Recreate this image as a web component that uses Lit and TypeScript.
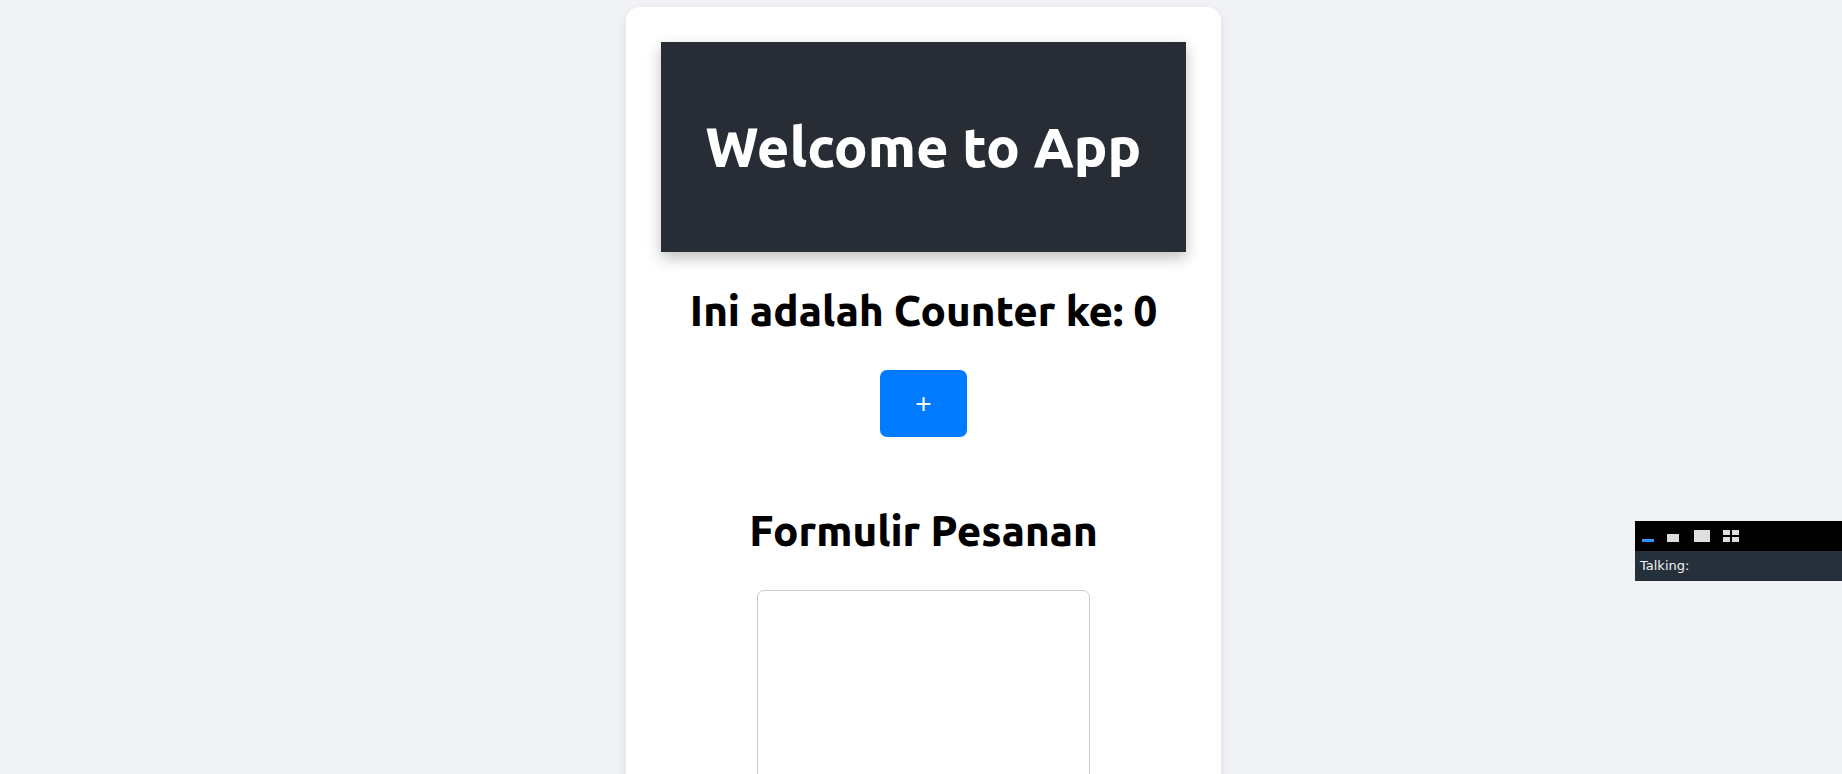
import { LitElement, html, css } from "lit";
import { customElement, state } from "lit/decorators.js";

@customElement("talking-panel")
export class TalkingPanel extends LitElement {
  static styles = css`
    :host {
      display: block;
      background: #26303b;
      color: #f2f2f2;
      font: 13px/30px "DejaVu Sans", sans-serif;
    }
    .bar {
      display: flex;
      align-items: center;
      height: 30px;
      background: #000;
    }
    .view {
      display: flex;
      padding: 0 6px;
      border: 0;
      background: none;
      color: #dedede;
      cursor: pointer;
    }
    .active {
      color: #2c98ff;
    }
    .label {
      margin: 0;
      padding: 0 5px;
    }
  `;

  render() {
    return html`
      <div class="bar">
        <button class="view active" aria-label="Minimize">
          <svg width="14" height="14"><path d="M1 10h12v3H1z" fill="currentColor" /></svg>
        </button>
        <button class="view" aria-label="Small view">
          <svg width="14" height="14"><path d="M0 5h12v8H0z" fill="currentColor" /></svg>
        </button>
        <button class="view" aria-label="Speaker view">
          <svg width="17" height="14"><path d="M1 1h16v12H1z" fill="currentColor" /></svg>
        </button>
        <button class="view" aria-label="Grid view">
          <svg width="17" height="14">
            <path d="M1 1h7v5H1zM10 1h7v5h-7zM1 8h7v5H1zM10 8h7v5h-7z" fill="currentColor" />
          </svg>
        </button>
      </div>
      <p class="label">Talking:</p>
    `;
  }
}

@customElement("app-root")
export class AppRoot extends LitElement {
  static styles = css`
    :host {
      display: block;
      box-sizing: border-box;
      height: 100vh;
      padding: 7px 0 0 5px;
      overflow: hidden;
      background: #f0f2f5;
      color: #000;
      font-family: Ubuntu, "Noto Sans", sans-serif;
      text-align: center;
    }
    .card {
      box-sizing: border-box;
      max-width: 595px;
      margin: 0 auto;
      padding: 35px;
      border-radius: 14px;
      background: #fff;
      box-shadow: 0 4px 10px rgba(0, 0, 0, 0.1);
    }
    .banner {
      padding: 73px 28px;
      background: #282c34;
      color: #fff;
      box-shadow: 0 6px 14px rgba(0, 0, 0, 0.25);
    }
    .title {
      margin: 0;
      font-size: 56px;
      line-height: 64px;
      font-weight: 800;
      white-space: nowrap;
    }
    .heading {
      margin: 35px 0;
      font-size: 42px;
      line-height: 48px;
      font-weight: 800;
      white-space: nowrap;
    }
    .add {
      display: block;
      margin: 0 auto;
      padding: 17px 35px;
      border: 0;
      border-radius: 7px;
      background: #007bff;
      color: #fff;
      font: 28px/33px "Liberation Sans", Arial, sans-serif;
      cursor: pointer;
    }
    .form {
      padding-top: 35px;
    }
    .order {
      display: block;
      box-sizing: border-box;
      width: 100%;
      max-width: 333px;
      height: 350px;
      margin: 0 auto;
      padding: 14px;
      border: 1px solid #ccc;
      border-radius: 7px;
      background: #fff;
      font: 20px/28px Ubuntu, "Noto Sans", sans-serif;
      resize: none;
    }
    .talking {
      position: fixed;
      top: 521px;
      right: 0;
      width: 207px;
      text-align: left;
    }
  `;

  @state() private count = 0;

  render() {
    return html`
      <main class="card">
        <header class="banner"><h1 class="title">Welcome to App</h1></header>
        <h2 class="heading">Ini adalah Counter ke: ${this.count}</h2>
        <button class="add" @click=${() => this.count++}>+</button>
        <form class="form">
          <h2 class="heading"><label for="order">Formulir Pesanan</label></h2>
          <textarea class="order" id="order"></textarea>
        </form>
      </main>
      <talking-panel class="talking"></talking-panel>
    `;
  }
}
